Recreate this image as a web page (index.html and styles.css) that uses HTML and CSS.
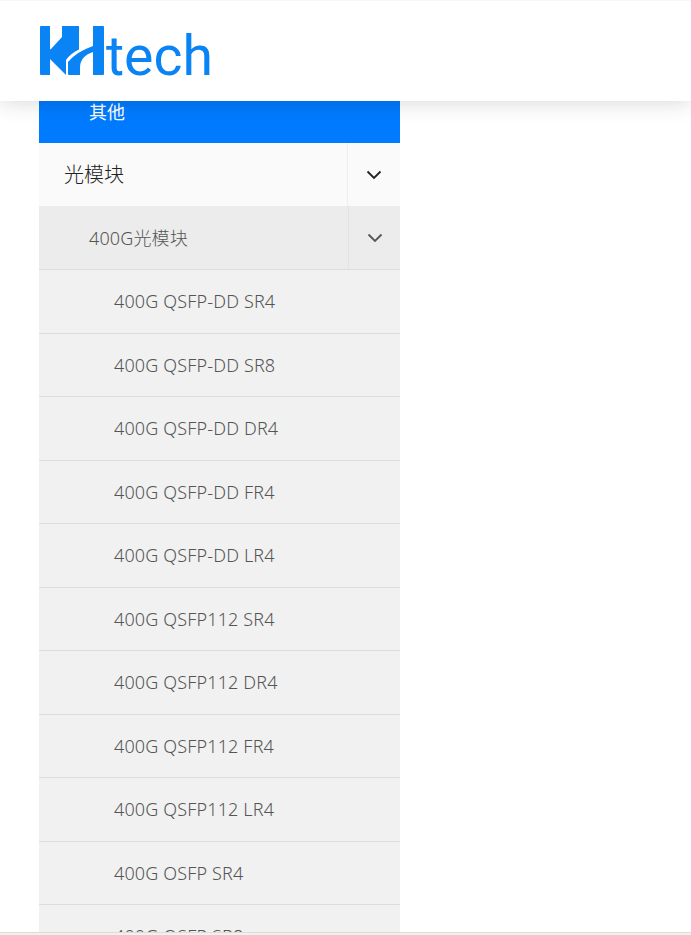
FILE: index.html
```html
<!DOCTYPE html>
<html lang="zh">
<head>
<meta charset="utf-8">
<title>KHtech</title>
<link rel="stylesheet" href="styles.css">
</head>
<body>
<header class="header">
  <svg class="logo" viewBox="40 26 172 50" width="172" height="50" role="img" aria-label="KHtech">
    <path class="logo-fill" d="M41 26H50V49.5L51 49L62 37V26H79V49.5Q71 53 66 60V75L50 59V75H41Q40 75 40 74V27Q40 26 41 26Z"/>
    <path class="logo-fill" d="M93 26H103Q104 26 104 27V74Q104 75 103 75H93V52Q80 56 80 68V75H69Q68 75 68 74V62Q76 52 93 46Z"/>
    <text class="logo-text" x="106" y="75" textLength="107" lengthAdjust="spacingAndGlyphs">tech</text>
  </svg>
</header>
<nav class="menu">
  <div class="row row-active"><a class="label lvl2">其他</a></div>
  <div class="row row-top">
    <a class="label lvl1">光模块</a>
    <span class="toggle"><svg viewBox="0 0 16 10" width="16" height="10"><path d="M1.5 1.5L8 8L14.5 1.5"/></svg></span>
  </div>
  <div class="row row-sub">
    <a class="label lvl2">400G光模块</a>
    <span class="toggle"><svg viewBox="0 0 16 10" width="16" height="10"><path d="M1.5 1.5L8 8L14.5 1.5"/></svg></span>
  </div>
  <div class="row row-item"><a class="label lvl3">400G QSFP-DD SR4</a></div>
  <div class="row row-item"><a class="label lvl3">400G QSFP-DD SR8</a></div>
  <div class="row row-item"><a class="label lvl3">400G QSFP-DD DR4</a></div>
  <div class="row row-item"><a class="label lvl3">400G QSFP-DD FR4</a></div>
  <div class="row row-item"><a class="label lvl3">400G QSFP-DD LR4</a></div>
  <div class="row row-item"><a class="label lvl3">400G QSFP112 SR4</a></div>
  <div class="row row-item"><a class="label lvl3">400G QSFP112 DR4</a></div>
  <div class="row row-item"><a class="label lvl3">400G QSFP112 FR4</a></div>
  <div class="row row-item"><a class="label lvl3">400G QSFP112 LR4</a></div>
  <div class="row row-item"><a class="label lvl3">400G OSFP SR4</a></div>
  <div class="row row-item"><a class="label lvl3">400G OSFP SR8</a></div>
</nav>
<div class="scrollbar"></div>
</body>
</html>
```
FILE: styles.css
```css
html, body { margin: 0; padding: 0; height: 935px; overflow: hidden; background: #fff; }
body { font-family: "Noto Sans", "Noto Sans CJK SC", sans-serif; font-weight: 300; }
.header { height: 101px; background: #fff; border-top: 1px solid #f8f8f8; box-shadow: 0 2px 20px rgba(0,0,0,.15); position: relative; z-index: 2; display: flex; align-items: flex-start; padding: 25px 0 0 40px; box-sizing: border-box; }
.logo { overflow: visible; }
.logo-fill { fill: #0a84f5; }
.logo-text { fill: #0a84f5; font-family: Roboto, sans-serif; font-size: 55px; font-weight: 400; }
.menu { width: 361px; margin-left: 39px; }
.row { display: flex; box-sizing: border-box; height: 63.5px; align-items: center; }
.row-active { height: 42px; background: #007bff; color: #fff; align-items: flex-start; }
.row-active .label { line-height: 22px; font-weight: 400; }
.row-top { background: #fafafa; color: #222; height: 63px; }
.row-sub { background: #ececec; color: #555; height: 64px; border-bottom: 1px solid #ddd; }
.row-item { background: #f1f1f1; color: #555; border-bottom: 1px solid #ddd; }
.label { flex: 1; font-size: 18px; }
.lvl1 { padding-left: 25px; padding-bottom: 2px; font-size: 20px; }
.lvl2 { padding-left: 50px; }
.row-sub .lvl2 { padding-bottom: 2px; letter-spacing: .15px; }
.lvl3 { padding-left: 75px; letter-spacing: .15px; }
.toggle { width: 53px; height: 100%; display: flex; align-items: center; justify-content: center; border-left: 1px solid #eee; box-sizing: border-box; }
.row-sub .toggle { width: 52px; border-left-color: #e2e2e2; }
.toggle svg path { fill: none; stroke: currentColor; stroke-width: 1.8; }
.scrollbar { position: fixed; left: 0; right: 0; bottom: 0; height: 3px; background: #f0f0f0; border-top: 1px solid #ddd; box-sizing: border-box; }
```
